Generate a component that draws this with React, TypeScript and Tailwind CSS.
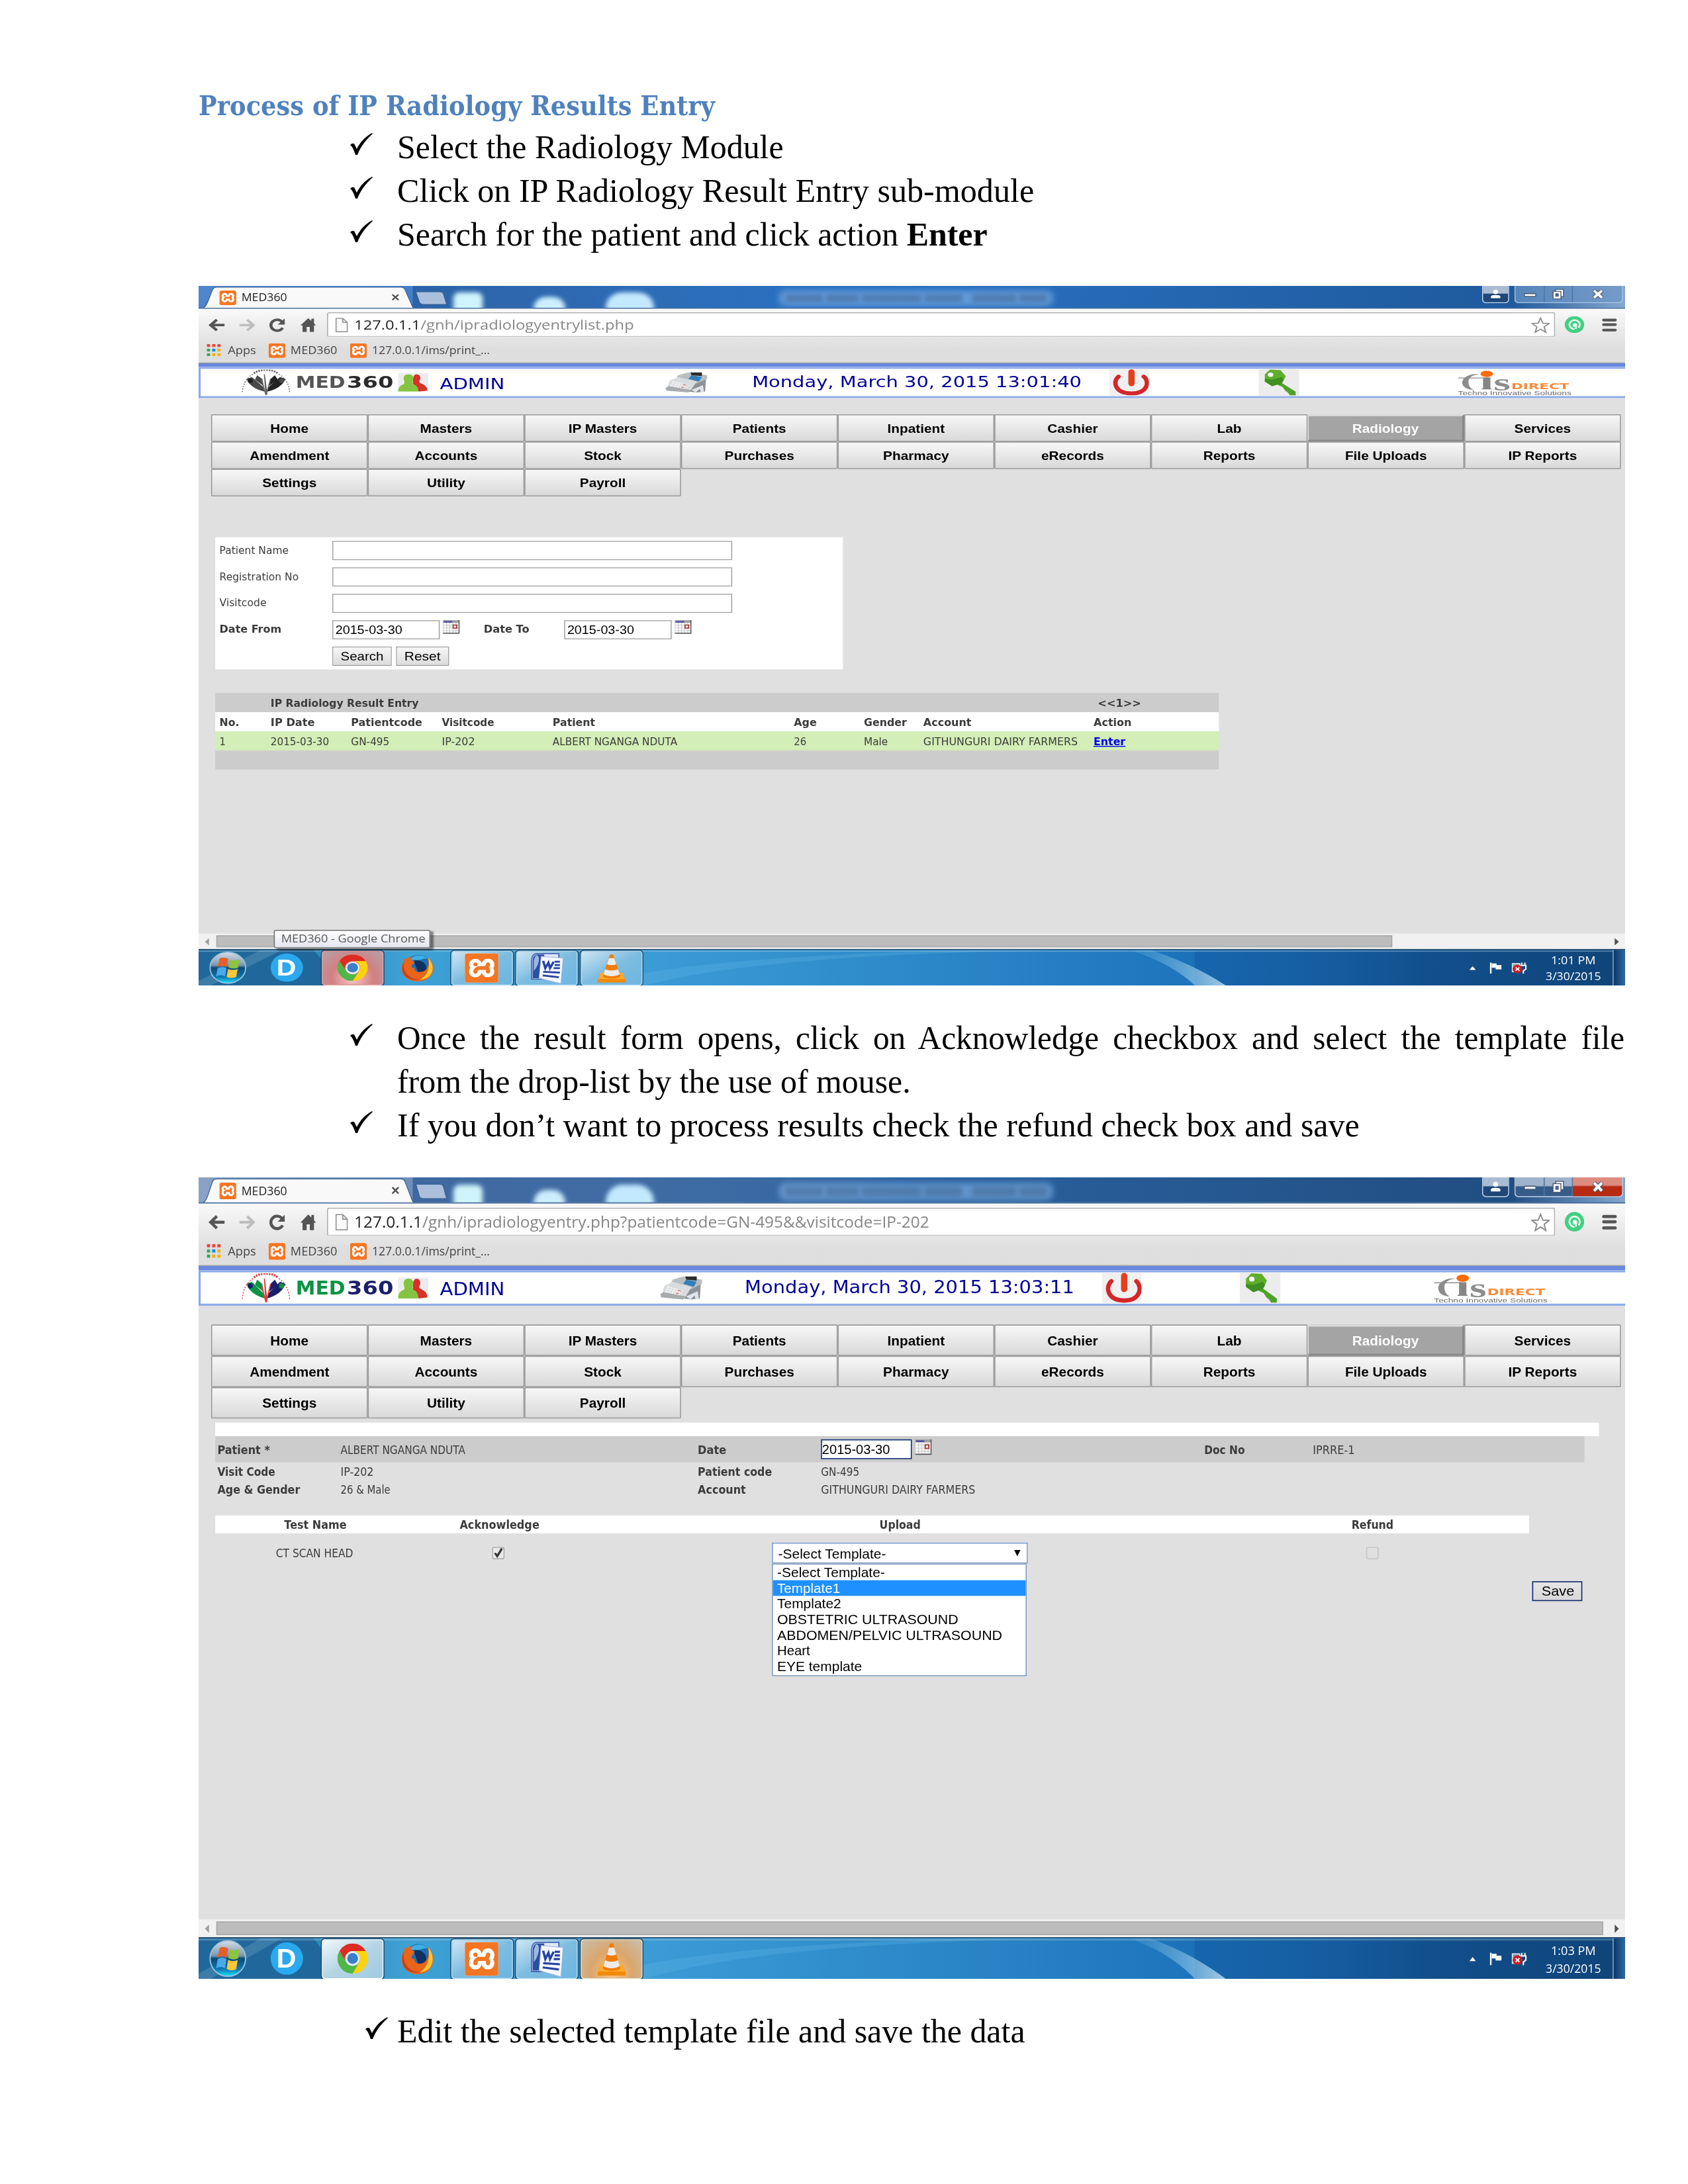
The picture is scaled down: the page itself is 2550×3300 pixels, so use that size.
import { useLayoutEffect, useRef, useState, type ReactNode } from "react";
import { SiXampp } from "react-icons/si";

/* Text squeezed or stretched horizontally to an exact width. */
function Fit({ w, className = "", children }: { w: number; className?: string; children: ReactNode }) {
  const ref = useRef<HTMLSpanElement>(null);
  const [s, setS] = useState(1);
  useLayoutEffect(() => {
    if (ref.current && ref.current.offsetWidth) setS(w / ref.current.offsetWidth);
  }, [w]);
  return (
    <span className={"inline-block shrink-0 whitespace-nowrap text-left " + className} style={{ width: w }}>
      <span ref={ref} className="inline-block origin-left" style={{ transform: `scaleX(${s})` }}>
        {children}
      </span>
    </span>
  );
}

/* Page label: sits slightly low in its row. */
function Label({ w, className = "", children }: { w: number; className?: string; children: ReactNode }) {
  return <Fit w={w} className={"pt-[2px] " + className}>{children}</Fit>;
}

/* ---------- document text ---------- */

function Tick({ className }: { className: string }) {
  return (
    <svg viewBox="0 0 34 33" className={"h-[33px] w-[34px] shrink-0 " + className}>
      <path d="M0 18 C3 15 6 15 7 18 L10 24 C15 14 22 6 33 0 L34 1 C24 10 16 20 11 33 L8 33 C6 27 4 21 0 18Z" fill="#000" />
    </svg>
  );
}

function Step({ w, children, cont = false, last = false }: { w: number; children: ReactNode; cont?: boolean; last?: boolean }) {
  return (
    <div className="flex h-[66px] items-start">
      <div className={last ? "flex w-[300px] pl-[252px]" : "flex w-[300px] pl-[229px]"}>
        {!cont && <Tick className="mt-[12px]" />}
      </div>
      <Fit w={w} className="font-['Liberation_Serif',serif] text-[50px] leading-[66px] text-black">
        {children}
      </Fit>
    </div>
  );
}

/* ---------- small icons ---------- */

function Xampp({ className }: { className: string }) {
  return (
    <div className={"relative shrink-0 overflow-hidden rounded-[2px] bg-white " + className}>
      <SiXampp className="h-full w-full scale-[1.04] text-[#f37623]" />
    </div>
  );
}

function Calendar({ className = "" }: { className?: string }) {
  return (
    <svg viewBox="0 0 16 15" className={"h-[15px] w-[16px] shrink-0 " + className}>
      <rect width="16" height="15" fill="#fff" />
      <rect width="16" height="3" fill="#a0a0a0" />
      <rect x="1" y="1" width="8" height="1.6" fill="#4a4aa8" />
      <path d="M1 5.5H15M1 8.5H15M1 11.5H15M3.5 3V14M6.5 3V14M9.5 3V14M12.5 3V14" stroke="#c8c8c8" strokeWidth="0.8" />
      <rect x="9.8" y="5.3" width="3.4" height="3.4" fill="#fff" stroke="#a83c3c" strokeWidth="1.2" />
      <path d="M0 14.4H16M15.5 0V15" stroke="#555" strokeWidth="1.2" />
      <path d="M0.3 0V15" stroke="#aaa" strokeWidth="0.6" />
    </svg>
  );
}

function ChromeIcon() {
  return (
    <svg viewBox="0 0 48 48" className="h-[29px] w-[29px]">
      <path d="M24 12H44.8A24 24 0 0 0 3.2 12L13.6 30A12 12 0 0 1 24 12Z" fill="#dd2c20" />
      <path d="M24 12H44.8A24 24 0 0 1 24 48L34.4 30A12 12 0 0 0 24 12Z" fill="#fdd20a" />
      <path d="M13.6 30L3.2 12A24 24 0 0 0 24 48L34.4 30A12 12 0 0 1 13.6 30Z" fill="#4fb648" />
      <circle cx="24" cy="24" r="11" fill="#eef3f7" />
      <circle cx="24" cy="24" r="8.6" fill="#3a7fcb" />
    </svg>
  );
}

function FirefoxIcon() {
  return (
    <svg viewBox="0 0 31 31" className="h-[31px] w-[31px]">
      <circle cx="16.5" cy="14" r="12.5" fill="#1c6fb6" />
      <path d="M8 6A12.5 12.5 0 0 1 26 6C22 4 19 8 14 7C11 7 9 8 8 6Z" fill="#3db0e8" />
      <path d="M12 8C18 6 24 10 24 16C24 20 20 22 16 20Z" fill="#10305f" />
      <path d="M25 4C33 11 32 22 26 27C20 32 10 32 4 26C-1 20 0 12 3 8L3 5L5 6L9 3C9 6 10 8 13 9L11 12C9 14 10 16 13 16C12 20 17 21 20 20C25 19 28 12 25 4Z" fill="#e8641b" />
      <path d="M26 5C32 12 31 21 26 26C23 28 20 29 17 29C25 25 28 16 26 5Z" fill="#fbc62d" />
      <path d="M3 8C1 14 3 22 9 26C15 30 20 28 23 26C16 31 6 30 2 22C0 17 1 11 3 8Z" fill="#c8401a" />
    </svg>
  );
}

function WordIcon() {
  return (
    <svg viewBox="0 0 32 34" className="h-[34px] w-[32px]">
      <path d="M6 1H27V29H1V8C1 4 3 1 6 1Z" fill="#dfe8f8" stroke="#4a67b4" strokeWidth="1.2" />
      <path d="M6 2H13V28H2V8C2 5 4 2 6 2Z" fill="#2b4fa0" />
      <path d="M5 3C10 2 8 14 3 20V8Z" fill="#9db7ea" />
      <path d="M10 4L31 6L29 34L8 28Z" fill="#f4f7fd" stroke="#9fb2d8" strokeWidth="0.6" />
      <path d="M12 9L14 17L17 11L18.5 17L22 10" stroke="#2443a0" strokeWidth="2.2" fill="none" />
      <path d="M23 10H28M23 13.5H28M22 17H28M12 21L28 22M11.5 25L27 27" stroke="#2443a0" strokeWidth="2" />
    </svg>
  );
}

function VlcIcon() {
  return (
    <svg viewBox="0 0 27 32" className="h-[32px] w-[27px]">
      <path d="M3 21H24L27 30V32H0V30Z" fill="#f28a0c" />
      <path d="M3 21H24L26 28H1Z" fill="#ffab2e" />
      <path d="M12 1H15L22 25C20 28 7 28 5 25Z" fill="#f07d0a" />
      <path d="M11 5H16L18 11.5C16 13 11 13 9.2 11.5Z" fill="#ecebe8" />
      <path d="M7.4 17C10 19 17 19 19.6 17L21.3 22.6C18 25.5 9 25.5 5.7 22.6Z" fill="#ecebe8" />
    </svg>
  );
}

function StartOrb({ id }: { id: string }) {
  return (
    <svg viewBox="0 0 38 38" className="h-[37px] w-[38px]">
      <defs>
        <linearGradient id={id} x1="0" y1="0" x2="0" y2="1">
          <stop offset="0" stopColor="#d5dde6" />
          <stop offset="0.42" stopColor="#7d97ae" />
          <stop offset="0.5" stopColor="#0c4a78" />
          <stop offset="0.8" stopColor="#0a78b4" />
          <stop offset="1" stopColor="#1be4ff" />
        </linearGradient>
      </defs>
      <circle cx="19" cy="19" r="17.5" fill={`url(#${id})`} stroke="#9cc3dc" strokeWidth="1.2" />
      <path d="M11 8.5C14 7 17 8 19.5 9L18 18C15 16.5 12 16.5 9 18Z" fill="#e4602a" />
      <path d="M21 10C24 11.5 27 11 30.5 9.5L29 19C26 20.5 22.5 20 19.5 18.5Z" fill="#8cc441" />
      <path d="M9 19.5C12 18 15 18 17.7 19.5L16.3 28.5C13.5 27 10.5 27 7.5 28.5Z" fill="#4aa9e6" />
      <path d="M19.3 20.3C22 21.8 25.5 22 28.7 20.5L27.2 29.5C24 31 20.5 30.8 17.8 29.3Z" fill="#fcc634" />
    </svg>
  );
}

function MedLogo({ color }: { color: boolean }) {
  const green = color ? "#0b9444" : "#4a4a4a";
  const navy = color ? "#1b1f6b" : "#222222";
  const red = color ? "#e03a3e" : "#666666";
  return (
    <div className="flex h-[28px] w-[147px] shrink-0 items-center">
      <svg viewBox="0 0 47 28" className="h-[28px] w-[47px] shrink-0">
        <path d="M12 4A14 9 0 0 1 35 4" fill="none" stroke={red} strokeWidth="2" strokeDasharray="1.6 0.9" />
        <path d="M11 5C5 9 1 16 0.8 26M36 5C42 9 46 16 46.2 26" fill="none" stroke={red} strokeWidth="1" strokeDasharray="1.2 1.5" />
        <path d="M5 10L10 8L21 19L22.500 24C14 22 7 17 5 10Z" fill={green} />
        <path d="M15 6L20 10L21.500 18L13 11Z" fill={green} />
        <path d="M42 10L37 8L26 19L24.500 24C33 22 40 17 42 10Z" fill={navy} />
        <path d="M32 6L28 10L26 18L35 11Z" fill={navy} />
        <circle cx="8.500" cy="12" r="2.500" fill={navy} />
        <circle cx="38.500" cy="12" r="2.500" fill={green} />
        <path d="M23.500 28L19 10M23.500 28L22 5L24.500 27M23.500 28L28 10" fill="none" stroke={red} strokeWidth="1" />
      </svg>
      <Fit w={47} className={color ? "ml-[5px] font-['DejaVu_Sans',sans-serif] text-[18.5px] leading-[28px] font-bold text-[#0b9444]" : "ml-[5px] font-['DejaVu_Sans',sans-serif] text-[18.5px] leading-[28px] font-bold text-[#555555]"}>MED</Fit>
      <Fit w={45} className={color ? "ml-[2px] font-['DejaVu_Sans',sans-serif] text-[18.5px] leading-[28px] font-bold text-[#1b1f6b]" : "ml-[2px] font-['DejaVu_Sans',sans-serif] text-[18.5px] leading-[28px] font-bold text-[#2a2a2a]"}>360</Fit>
    </div>
  );
}

function People() {
  return (
    <svg viewBox="0 0 29 20" className="ml-[3px] h-[20px] w-[29px] shrink-0">
      <rect width="29" height="20" fill="#ececec" />
      <path d="M17 1C21 1 22 4 21 7C20 9 20 10 22 11C26 13 28 15 28 19L20 20L14 11C15 9 13 3 17 1Z" fill="#d8322b" />
      <path d="M10 1C14 1 15 4 14.5 7C14 9 13 11 15 12C18 13 19.5 16 19.5 20H0C0 16 2 13 5 12C7 11 6 9 5.5 7C5 4 6 1 10 1Z" fill="#85c441" />
    </svg>
  );
}

function Register({ className }: { className: string }) {
  return (
    <svg viewBox="0 0 41 24" className={"h-[24px] w-[41px] shrink-0 " + className}>
      <path d="M23 14L39 6L38 22L30 23L22 22Z" fill="#8d9296" />
      <path d="M25 20L36 15L37 23H34L33 19L29 23Z" fill="#dfe5ea" />
      <path d="M12 4L22 1L40 4L40 8L30 13L10 8Z" fill="#b9bec2" />
      <path d="M4 10L12 6L30 11L24 21L2 17Z" fill="#d9dcde" />
      <path d="M0 18L3 16L24 20L22 23L1 21Z" fill="#a7abae" />
      <path d="M25 4L35 6L32 11L22 8Z" fill="#2f7fbd" />
      <path d="M24 1L35 1L35 5L25 4Z" fill="#2b2b2b" />
      <path d="M7 11L22 15M6 13L21 17M5 15L19 18.5" stroke="#f7f7f7" strokeWidth="1.3" strokeDasharray="2 1" />
      <path d="M17 14L20 15M15 17L18 17.5" stroke="#d88" strokeWidth="1.2" />
    </svg>
  );
}

function Power({ className }: { className: string }) {
  return (
    <svg viewBox="0 0 38 30" className={"h-[30px] w-[38px] shrink-0 " + className}>
      <rect width="38" height="30" fill="#f0f0f0" />
      <path d="M9 8.5C3 14 5 27 21.3 27C37 27 39 14 33 8.5" fill="none" stroke="#d3272a" strokeWidth="4.200" strokeLinecap="round" />
      <path d="M21.3 3.5V16" stroke="#e33f1f" strokeWidth="6" strokeLinecap="round" />
    </svg>
  );
}

function KeyIcon({ className }: { className: string }) {
  return (
    <svg viewBox="0 0 39 30" className={"h-[30px] w-[39px] shrink-0 " + className}>
      <rect width="39" height="30" fill="#ececec" />
      <path d="M20 14L35.5 25V29L30 29L28 26L25.5 24L23 20L17 17Z" fill="#4ea22a" />
      <path d="M11 1L21 1.5L26 8L23 15L13 19L6 14L6 6Z" fill="#5fae2c" />
      <path d="M6 11L13 12L22 9L24 12L22 16L13 19L6 14Z" fill="#3f8f22" />
      <ellipse cx="11.5" cy="6.5" rx="2.6" ry="2.3" fill="#fff" />
    </svg>
  );
}

function CisLogo({ className }: { className: string }) {
  return (
    <div className={"flex h-[30px] w-[109px] shrink-0 flex-col justify-end " + className}>
      <div className="flex h-[22px] items-end">
        <svg viewBox="0 0 36 22" className="h-[22px] w-[36px] shrink-0">
          <path d="M20 4C11 3 4 8 4 13C4 18 9 21 15 21C11 19 10 16 10 12C10 8 13 5 20 4Z" fill="#8c8c8c" />
          <path d="M0 8H26" stroke="#8c8c8c" strokeWidth="0.9" />
          <path d="M24 7.5H31V19L32.5 20.5H22L24 19Z" fill="#858585" />
          <ellipse cx="27.5" cy="3.6" rx="6" ry="3.5" fill="#fd6c06" />
        </svg>
        <Fit w={16} className="-ml-[2px] font-['Liberation_Serif',serif] text-[26px] leading-[17px] font-bold text-[#8c8c8c]">s</Fit>
        <Fit w={56} className="ml-[1px] font-['DejaVu_Sans',sans-serif] text-[8.5px] leading-[9px] font-bold text-[#fb8a38]">DIRECT</Fit>
      </div>
      <Fit w={109} className="font-['Liberation_Sans',sans-serif] text-[6px] leading-[6px] text-[#6a6a6a]">Techno Innovative Solutions</Fit>
    </div>
  );
}

/* ---------- browser chrome ---------- */

const segoe = "font-['Open_Sans',sans-serif]";

function TitleBar({ active }: { active: boolean }) {
  return (
    <div
      className={
        active
          ? "relative flex h-[25px] overflow-hidden border-b border-[#41699c] bg-linear-to-r from-[#8ba2c4] via-[#2b62a0] via-50% to-[#1f4a7c]"
          : "relative flex h-[25px] overflow-hidden border-b border-[#41699c] bg-linear-to-r from-[#4f86cc] via-[#2d77c9] via-40% to-[#1c5596]"
      }
    >
      <div className="absolute inset-y-0 left-[205px] w-[500px] bg-linear-to-r from-[#1d4f8e]/60 to-transparent" />
      <div className="absolute inset-y-0 right-0 w-[110px] bg-linear-to-r from-transparent to-[#86a8d0]" />
      <div className="absolute top-[7px] left-[244px] h-[26px] w-[28px] rounded-md bg-[#cff4fb] blur-[2.5px]" />
      <div className="absolute top-[12px] left-[321px] h-[20px] w-[30px] rounded-t-xl bg-[#cdeeff] blur-[2.5px]" />
      <div className="absolute top-[7px] left-[390px] h-[30px] w-[46px] rounded-t-2xl bg-[#c2e9ff] blur-[2.5px]" />
      <div className="absolute top-[5px] left-[556px] h-[17px] w-[262px] rounded-md bg-[#86b6ea] opacity-60 blur-[3px]" />
      <div className="absolute top-[9px] left-[562px] flex h-[9px] w-[250px] gap-[3px] opacity-45 blur-[2px]">
        <div className="w-[38px] bg-[#3c5f8c]" />
        <div className="w-[32px] bg-[#3c5f8c]" />
        <div className="w-[60px] bg-[#3c5f8c]" />
        <div className="w-[38px] bg-[#3c5f8c]" />
        <div className="w-[4px]" />
        <div className="w-[45px] bg-[#3c5f8c]" />
        <div className="w-[27px] bg-[#3c5f8c]" />
      </div>
      <div className="relative flex h-[25px] w-[208px] shrink-0 items-center">
        <svg viewBox="0 0 208 25" className="absolute inset-0 h-[25px] w-[208px]">
          <path d="M0 25C6 25 7 22 9 17L13 5C14 2 15 1.5 18 1.5H193C196 1.5 197 2 198 5L203 18C205 23 205 25 209 25Z" fill="#f9f9f9" stroke="#3c5f90" strokeWidth="0.8" />
        </svg>
        <Xampp className="ml-[20px] h-[16px] w-[16px]" />
        <Fit w={44} className={"relative ml-[5px] text-[12px] leading-[16px] text-[#222] " + segoe}>MED360</Fit>
        <svg viewBox="0 0 7 7" className="relative ml-[100px] h-[7px] w-[7px]">
          <path d="M0.5 0.5L6.5 6.5M6.5 0.5L0.5 6.5" stroke="#555" strokeWidth="1.6" />
        </svg>
      </div>
      <svg viewBox="0 0 31 15" className="relative mt-[6px] -ml-[1px] h-[15px] w-[31px]">
        <path d="M1 0.5H24C26 0.5 27 1 27.5 3L30.5 14.3H8C6 14.3 5 13.5 4.5 12Z" fill="#a9bfdb" stroke="#3a6093" strokeWidth="0.8" />
      </svg>
      <div className="relative ml-auto flex h-[19px] items-start pr-[2px]">
        <div className="mr-[5.5px] flex h-[18.5px] w-[26px] items-center justify-center rounded-b-[4px] border border-t-0 border-[#c4d6ea] bg-linear-to-b from-[#a9bcd4] from-45% to-[#1f4777] to-50%">
          <svg viewBox="0 0 10 10" className="h-[10px] w-[10px]">
            <circle cx="5" cy="2.6" r="2.4" fill="#fff" />
            <path d="M0.5 9.5V7.5C0.5 5.5 9.5 5.5 9.5 7.5V9.5Z" fill="#fff" />
          </svg>
        </div>
        <div className={active ? "flex h-[18.5px] rounded-b-[4px] border border-t-0 border-[#c4d6ea] bg-linear-to-b from-[#a0b3cc] from-45% to-[#385c89] to-50%" : "flex h-[18.5px] rounded-b-[4px] border border-t-0 border-[#a9c4e2] bg-[#6e97c6]/70"}>
          <div className="flex w-[28px] items-center justify-center border-r border-[#4c76a8]">
            <div className="mt-[3px] h-[4px] w-[12px] rounded-[1px] border border-[#4a5a75] bg-white" />
          </div>
          <div className="flex w-[27px] items-center justify-center border-r border-[#4c76a8]">
            <svg viewBox="0 0 12 12" className="h-[12px] w-[12px]">
              <rect x="3.5" y="0.8" width="7.5" height="8" fill="#fff" stroke="#4a5a75" strokeWidth="0.9" />
              <rect x="1" y="3" width="7.5" height="8.3" fill="#fff" stroke="#4a5a75" strokeWidth="0.9" />
              <rect x="3.5" y="5.5" width="2.6" height="3" fill="#4a6a95" stroke="#4a5a75" strokeWidth="0.6" />
            </svg>
          </div>
          <div className={active ? "flex w-[47px] items-center justify-center rounded-br-[3px] bg-linear-to-b from-[#dd8d80] from-40% to-[#b82a12] to-50%" : "flex w-[47px] items-center justify-center"}>
            <svg viewBox="0 0 12 10" className="h-[10px] w-[12px]">
              <path d="M2 1L10 9M10 1L2 9" stroke="#4a5a75" strokeWidth="4.2" />
              <path d="M2.2 1.2L9.8 8.8M9.8 1.2L2.2 8.8" stroke="#fff" strokeWidth="2.6" />
            </svg>
          </div>
        </div>
      </div>
    </div>
  );
}

function Toolbar({ path, width }: { path: string; width: number }) {
  return (
    <div className="h-[60px] border-b border-[#a3a3a3] bg-linear-to-b from-[#f9f9f9] to-[#dedede] to-75%">
      <div className="flex h-[35px] items-center">
        <svg viewBox="0 0 16 14" className="ml-[9px] h-[14px] w-[16px]">
          <path d="M16 7H3M8.5 1.2L2.5 7L8.5 12.8" fill="none" stroke="#555" strokeWidth="2.8" />
        </svg>
        <svg viewBox="0 0 16 14" className="ml-[14px] h-[14px] w-[16px]">
          <path d="M0 7H13M7.5 1.2L13.5 7L7.5 12.8" fill="none" stroke="#bdbdbd" strokeWidth="2.6" />
        </svg>
        <svg viewBox="0 0 16 16" className="ml-[12px] h-[16px] w-[16px]">
          <path d="M13 4.5A6 6 0 1 0 13.5 11" fill="none" stroke="#555" strokeWidth="2.8" />
          <path d="M15.5 0.8V7.5H8.8Z" fill="#555" />
        </svg>
        <svg viewBox="0 0 16 16" className="ml-[14px] h-[16px] w-[16px]">
          <path d="M8 0.5L11 3.5V1H13.5V6L15.5 8.5H13.5V15.5H9.5V10H6.5V15.5H2.5V8.5H0.5Z" fill="#555" />
        </svg>
        <div className="ml-[10px] flex h-[27px] w-[1176px] items-center rounded-[2px] border border-[#a8a8a8] border-b-[#c6c6c6] bg-white">
          <svg viewBox="0 0 12 16" className="ml-[6.5px] h-[16px] w-[12px]">
            <path d="M0.6 0.6H7L11.4 5V15.4H0.6Z" fill="#fafafa" stroke="#909090" strokeWidth="1.1" />
            <path d="M7 0.6V5H11.4" fill="none" stroke="#909090" strokeWidth="1.1" />
          </svg>
          <Fit w={width} className={"ml-[6px] pb-[1px] text-[15px] leading-[24px] text-[#868686] " + segoe}>
            <span className="text-[#222]">127.0.1.1</span>{path}
          </Fit>
          <svg viewBox="0 0 18 18" className="mr-[4px] ml-auto h-[18px] w-[18px]">
            <path d="M9 1.2L11.2 6.9L17.2 7.2L12.5 11L14.1 16.9L9 13.5L3.9 16.9L5.5 11L0.8 7.2L6.8 6.9Z" fill="#fff" stroke="#8a8a8a" strokeWidth="1.2" />
          </svg>
        </div>
        <svg viewBox="0 0 20 20" className="ml-[9px] h-[19px] w-[19px]">
          <circle cx="10" cy="10" r="9.8" fill="#43cf80" />
          <path d="M10 15.2A5.2 5.2 0 1 1 14 13.5" fill="none" stroke="#e8fff2" strokeWidth="1.8" />
          <circle cx="10.5" cy="10.5" r="2.3" fill="#e8fff2" />
          <path d="M11.5 10V15" stroke="#e8fff2" strokeWidth="1.6" />
        </svg>
        <div className="ml-[17px] flex w-[14px] flex-col gap-[2.5px]">
          <div className="h-[3px] rounded-full bg-[#555]" />
          <div className="h-[3px] rounded-full bg-[#555]" />
          <div className="h-[3px] rounded-full bg-[#555]" />
        </div>
      </div>
      <div className={"flex h-[24px] items-center text-[12px] leading-[16px] text-[#444] " + segoe}>
        <div className="mt-[-3px] ml-[8px] grid grid-cols-3 gap-[2px]">
          <div className="size-[3px] bg-[#ea4335]" />
          <div className="size-[3px] bg-[#ea4335]" />
          <div className="size-[3px] bg-[#ea4335]" />
          <div className="size-[3px] bg-[#34a853]" />
          <div className="size-[3px] bg-[#1a88f0]" />
          <div className="size-[3px] bg-[#f5b000]" />
          <div className="size-[3px] bg-[#34a853]" />
          <div className="size-[3px] bg-[#f5b000]" />
          <div className="size-[3px] bg-[#f5b000]" />
        </div>
        <Fit w={27} className="mt-[-3px] ml-[7px]">Apps</Fit>
        <Xampp className="mt-[-3px] ml-[12px] h-[16px] w-[16px]" />
        <Fit w={45} className="mt-[-3px] ml-[5px]">MED360</Fit>
        <Xampp className="mt-[-3px] ml-[12px] h-[16px] w-[16px]" />
        <Fit w={113} className="mt-[-3px] ml-[5px]">127.0.0.1/ims/print_...</Fit>
      </div>
    </div>
  );
}

type HeaderGaps = { register: string; date: string; key: string; cis: string };

function AppHeader({ stamp, color, gaps }: { stamp: string; color: boolean; gaps: HeaderGaps }) {
  return (
    <div className="border-t-[4px] border-[#6687dd]">
      <div className="flex h-[34px] items-center border-2 border-r-0 border-[#8caae8] bg-white font-['DejaVu_Sans',sans-serif] text-[17px] leading-[24px] text-[#000099]">
        <div className="w-[38.5px] shrink-0" />
        <MedLogo color={color} />
        <People />
        <Fit w={62} className="ml-[11px] pt-[1px]">ADMIN</Fit>
        <Register className={gaps.register} />
        <Fit w={316} className={"pb-[3px] " + gaps.date}>{stamp}</Fit>
        <Power className="ml-[26px]" />
        <KeyIcon className={gaps.key} />
        <CisLogo className={gaps.cis} />
      </div>
    </div>
  );
}

const menu = [
  "Home", "Masters", "IP Masters", "Patients", "Inpatient", "Cashier", "Lab", "Radiology", "Services",
  "Amendment", "Accounts", "Stock", "Purchases", "Pharmacy", "eRecords", "Reports", "File Uploads", "IP Reports",
  "Settings", "Utility", "Payroll",
];

function Menu() {
  return (
    <div className="mt-[18px] ml-[12px] grid w-[1350px] grid-cols-9 font-['Liberation_Sans',sans-serif] text-[13.2px] leading-[15px] font-bold text-black">
      {menu.map((m) => (
        <div
          key={m}
          className={
            m === "Radiology"
              ? "flex h-[30px] items-center justify-center border border-t-2 border-r-2 border-b-2 border-[#888] border-t-[#dcdcdc] border-l-[#dcdcdc] bg-[#a4a4a4] text-white"
              : "flex h-[30px] items-center justify-center rounded-[1px] border border-[#9b9b9b] bg-linear-to-b from-[#f7f7f7] to-[#d9d9d9]"
          }
        >
          {m}
        </div>
      ))}
    </div>
  );
}

function ScrollBar({ full }: { full: boolean }) {
  return (
    <div className="flex h-[17px] items-center bg-[#f1f1f1]">
      <div className="ml-[6px] size-0 border-y-[4px] border-r-[4px] border-y-transparent border-r-[#a0a0a0]" />
      <div className={full ? "ml-[7px] h-[13px] w-[1328px] border border-[#a8a8a8] bg-[#bcbcbc]" : "ml-[7px] h-[13px] w-[1126px] border border-[#a8a8a8] bg-[#bcbcbc]"} />
      <div className="mr-[6px] ml-auto size-0 border-y-[4px] border-l-[4px] border-y-transparent border-l-[#505050]" />
    </div>
  );
}

const plainBtn = "border-[#b5dcf2] bg-linear-to-br from-[#cfe5f2] via-[#7dbce0] to-[#6cb6e2]";
const tallBtn = "flex h-[38px] w-[59px] items-center justify-center rounded-[3px] border shadow-[0_0_0_1px_#1c4c6c] ";

function TaskBar({ time, id, first }: { time: string; id: string; first: boolean }) {
  return (
    <div className="relative flex h-[40px] items-center overflow-hidden border-t border-[#1c4460] bg-linear-to-r from-[#1e6498] via-[#3fa3d6] via-15% to-[#1766ad] to-45%">
      <svg viewBox="0 0 1366 40" preserveAspectRatio="none" className="absolute inset-0 h-[40px] w-[1366px]">
        <defs>
          <linearGradient id={id + "r"} x1="0" x2="1">
            <stop offset="0" stopColor="#1664ad" stopOpacity="0" />
            <stop offset="0.6" stopColor="#124f8c" />
            <stop offset="1" stopColor="#0f4478" />
          </linearGradient>
          <linearGradient id={id + "m"} x1="0" x2="1">
            <stop offset="0" stopColor="#3c9cd6" />
            <stop offset="1" stopColor="#1d74bb" />
          </linearGradient>
          <linearGradient id={id + "s"} x1="0" x2="1">
            <stop offset="0" stopColor="#5fb2e2" stopOpacity="0.2" />
            <stop offset="1" stopColor="#c4e6f6" />
          </linearGradient>
        </defs>
        <path d="M0 0H110L140 40H0Z" fill="#20689b" />
        <path d="M0 34L60 0H80L10 40H0Z" fill="#6fa3c4" opacity="0.35" />
        <rect x="424" width="530" height="40" fill={`url(#${id}m)`} />
        <path d="M424 40C520 10 700 0 900 0H760C640 2 500 10 424 26Z" fill="#67bbe8" opacity="0.25" />
        <path d="M900 0C930 10 960 25 985 40H1366V0Z" fill={`url(#${id}r)`} />
        <path d="M890 0H910C940 10 965 25 985 40H955C940 24 920 10 890 0Z" fill={`url(#${id}s)`} opacity="0.8" />
        <rect width="1366" height="1" y="1" fill="#9fd0ec" opacity="0.5" />
      </svg>
      <div className="relative ml-[8.5px] w-[38px]"><StartOrb id={id} /></div>
      <div className="relative ml-[22px] flex size-[31px] items-center justify-center rounded-full bg-[#2ba9ee] font-['Liberation_Sans',sans-serif] text-[26px] leading-[31px] font-bold text-white">D</div>
      <div className={"relative ml-[18.5px] " + tallBtn + (first ? "border-[#f6a3a0] bg-radial-[at_50%_80%] from-[#f7c9c9] via-[#d27f80] to-[#b5a3aa]" : "border-white bg-linear-to-br from-[#f2f8fb] via-[#b5d5e4] to-[#9ecbe2]")}>
        <ChromeIcon />
      </div>
      <div className="relative ml-[17px]"><FirefoxIcon /></div>
      <div className={"relative ml-[16.5px] " + tallBtn + plainBtn}><Xampp className="h-[32px] w-[32px]" /></div>
      <div className={"relative ml-[3.5px] " + tallBtn + plainBtn}><WordIcon /></div>
      <div className={"relative ml-[2.5px] " + tallBtn + (first ? plainBtn : "border-[#ffd9a8] bg-radial-[at_50%_90%] from-[#ffc27a] via-[#d9a66c] to-[#c9bfae]")}><VlcIcon /></div>
      <div className="relative ml-auto size-0 border-x-[3px] border-b-[4px] border-x-transparent border-b-white" />
      <svg viewBox="0 0 14 14" className="relative ml-[12px] h-[13px] w-[14px]">
        <path d="M2 1V14" stroke="#fff" strokeWidth="1.6" />
        <path d="M3 2H8V4H13V9H7V7H3Z" fill="#fff" />
      </svg>
      <svg viewBox="0 0 15 15" className="relative ml-[8px] h-[15px] w-[15px]">
        <path d="M10 2V5M13 2V5M8.5 5H14V9L11.5 11V14" fill="none" stroke="#f2f2f2" strokeWidth="1.4" />
        <path d="M1 3H8V12H1Z" fill="#8a96a0" stroke="#eee" strokeWidth="1" />
        <circle cx="6" cy="9" r="4.6" fill="#c8202a" />
        <path d="M4.2 7.2L7.8 10.8M7.8 7.2L4.2 10.8" stroke="#fff" strokeWidth="1.2" />
      </svg>
      <div className={"relative ml-[17px] flex w-[54px] flex-col items-center pt-[2px] text-[12px] leading-[16.5px] text-white " + segoe}>
        <Fit w={43}>{time}</Fit>
        <Fit w={53}>3/30/2015</Fit>
      </div>
      <div className="relative ml-[11px] h-[40px] w-[12px] border-l border-[#7aa6cf] bg-linear-to-r from-[#0c3866] to-[#2d6ba6]" />
    </div>
  );
}

/* ---------- page one ---------- */

const field = "flex items-center border border-[#a5a5a5] bg-white font-['Liberation_Sans',sans-serif] text-[13.3px] leading-[17px] text-black";
const button = "flex h-[21px] items-center justify-center rounded-[1px] border border-[#a0a0a0] border-b-[#888] bg-linear-to-b from-[#f6f6f6] to-[#dcdcdc] font-['Liberation_Sans',sans-serif] text-[13.3px] leading-[17px] text-black";
const tahoma = "font-['DejaVu_Sans',sans-serif] text-[11px] leading-[14px] text-[#3b3b3b]";

function SearchForm() {
  const rows: [string, number][] = [["Patient Name", 66], ["Registration No", 76], ["Visitcode", 45]];
  return (
    <div className={"mt-[44.5px] ml-[16px] flex h-[145px] w-[600.5px] flex-col bg-white pl-[4px] " + tahoma}>
      {rows.map(([label, w]) => (
        <div key={label} className="flex h-[29px] items-center">
          <div className="w-[108px]"><Label w={w}>{label}</Label></div>
          <div className={field + " h-[21px] w-[383px]"} />
        </div>
      ))}
      <div className="flex h-[29px] items-center">
        <div className="w-[108px] font-bold"><Label w={59}>Date From</Label></div>
        <div className={field + " h-[21px] w-[103px] pl-[2px]"}><Fit w={64}>2015-03-30</Fit></div>
        <Calendar className="mt-[-5px] ml-[3px]" />
        <Label w={44} className="ml-[23px] font-bold">Date To</Label>
        <div className={field + " ml-[33px] h-[21px] w-[103px] pl-[2px]"}><Fit w={64}>2015-03-30</Fit></div>
        <Calendar className="mt-[-5px] ml-[3px]" />
      </div>
      <div className="flex h-[29px] items-center pl-[108px]">
        <div className={button + " w-[57px]"}><Fit w={41}>Search</Fit></div>
        <div className={button + " ml-[4px] w-[51px]"}><Fit w={35}>Reset</Fit></div>
      </div>
    </div>
  );
}

const cols = "grid h-[21px] grid-cols-[49px_77px_87px_106px_231px_67px_57px_163px_120px] items-center pl-[4px] ";

function ResultTable() {
  return (
    <div className={"mt-[26.5px] ml-[16px] w-[961px] " + tahoma}>
      <div className={cols + "bg-[#cccccc] font-bold"}>
        <span />
        <Label w={142}>IP Radiology Result Entry</Label>
        <span /><span /><span /><span /><span /><span />
        <Label w={42} className="ml-[4px]">{"<<1>>"}</Label>
      </div>
      <div className={cols + "bg-white font-bold"}>
        <Label w={19}>No.</Label>
        <Label w={42}>IP Date</Label>
        <Label w={68}>Patientcode</Label>
        <Label w={50}>Visitcode</Label>
        <Label w={41}>Patient</Label>
        <Label w={22}>Age</Label>
        <Label w={41}>Gender</Label>
        <Label w={46}>Account</Label>
        <Label w={36}>Action</Label>
      </div>
      <div className={cols + "bg-[#d3eeb7]"}>
        <Label w={6}>1</Label>
        <Label w={56}>2015-03-30</Label>
        <Label w={37}>GN-495</Label>
        <Label w={32}>IP-202</Label>
        <Label w={119}>ALBERT NGANGA NDUTA</Label>
        <Label w={12}>26</Label>
        <Label w={23}>Male</Label>
        <Label w={148}>GITHUNGURI DAIRY FARMERS</Label>
        <Label w={31} className="font-bold text-[#0000ee]"><span className="underline">Enter</span></Label>
      </div>
      <div className="h-[21px] bg-[#cccccc]" />
    </div>
  );
}

/* ---------- page two ---------- */

const infoCols = "grid grid-cols-[118px_341.5px_118px_367px_104px_auto] items-center pl-[2px] ";
const options: [string, number][] = [
  ["-Select Template-", 103], ["Template1", 60], ["Template2", 61], ["OBSTETRIC ULTRASOUND", 173],
  ["ABDOMEN/PELVIC ULTRASOUND", 216], ["Heart", 32], ["EYE template", 81],
];

function ResultForm() {
  return (
    <div className={"mt-[4px] ml-[16px] flex-1 " + tahoma}>
      <div className="h-[13px] w-[1325px] bg-white" />
      <div className={infoCols + "h-[25px] w-[1311px] bg-[#cccccc]"}>
        <Label w={50} className="font-bold">Patient *</Label>
        <Label w={119}>ALBERT NGANGA NDUTA</Label>
        <Label w={27} className="font-bold">Date</Label>
        <div className="flex items-center">
          <div className="flex h-[19px] w-[87px] items-center border-[1.3px] border-[#0a2568] bg-white font-['Liberation_Sans',sans-serif] text-[13.3px] leading-[17px] text-black">
            <Fit w={65}>2015-03-30</Fit>
          </div>
          <Calendar className="mt-[-4px] ml-[3px]" />
        </div>
        <Label w={39} className="font-bold">Doc No</Label>
        <Label w={40}>IPRRE-1</Label>
      </div>
      <div className={infoCols + "h-[18px] w-[1311px]"}>
        <Label w={55} className="font-bold">Visit Code</Label>
        <Label w={32}>IP-202</Label>
        <Label w={71} className="font-bold">Patient code</Label>
        <Label w={37}>GN-495</Label>
      </div>
      <div className={infoCols + "h-[17px] w-[1311px]"}>
        <Fit w={79} className="font-bold">Age &amp; Gender</Fit>
        <Fit w={48}>26 &amp; Male</Fit>
        <Fit w={46} className="font-bold">Account</Fit>
        <Fit w={148}>GITHUNGURI DAIRY FARMERS</Fit>
      </div>
      <div className="mt-[16px] flex h-[17px] w-[1258px] items-center bg-white font-bold">
        <Label w={60} className="ml-[65.5px]">Test Name</Label>
        <Label w={76} className="ml-[108px]">Acknowledge</Label>
        <Label w={39} className="ml-[326px]">Upload</Label>
        <Label w={40} className="ml-[413px]">Refund</Label>
      </div>
      <div className="mt-[9px] flex h-[20px] items-center">
        <Label w={74} className="ml-[58px]">CT SCAN HEAD</Label>
        <svg viewBox="0 0 12 12" className="ml-[133px] h-[12px] w-[12px]">
          <rect x="0.5" y="0.5" width="11" height="11" rx="1.5" fill="#e9e9e9" stroke="#a8a8a8" />
          <path d="M2.8 6L5 9L9.5 1.5" fill="none" stroke="#333" strokeWidth="2" />
        </svg>
        <div className="relative ml-[256px] flex h-[20px] w-[245px] items-center border border-[#7b9ed6] border-b-[#8097b8] bg-white pl-[5px] font-['Liberation_Sans',sans-serif] text-[13.3px] leading-[15px] text-black">
          <Fit w={103}>-Select Template-</Fit>
          <div className="mr-[6px] ml-auto size-0 border-x-[3.5px] border-t-[6px] border-x-transparent border-t-black" />
          <div className="absolute top-[19px] left-[-1px] w-[244px] border border-[#7e9cbe] bg-white pb-[1px]">
            {options.map(([o, w], i) => (
              <div key={o} className={i === 1 ? "flex h-[15px] items-center bg-[#1e90ff] pl-[4px] text-white" : "flex h-[15px] items-center pl-[4px]"}>
                <Fit w={w}>{o}</Fit>
              </div>
            ))}
          </div>
        </div>
        <div className="ml-[324px] size-[12px] rounded-[2px] border border-[#c6c6c6] bg-[#e0e0e0]" />
      </div>
      <div className="mt-[16.5px] ml-[1261px] flex h-[19px] w-[48px] items-center justify-center border-[1.3px] border-[#0a2568] bg-linear-to-b from-[#e6e6e6] to-[#d8d8d8] font-['Liberation_Sans',sans-serif] text-[13.3px] leading-[15px] text-black">
        <Fit w={31}>Save</Fit>
      </div>
    </div>
  );
}

/* ---------- document ---------- */

const gapsOne: HeaderGaps = { register: "ml-[154px]", date: "ml-[42px]", key: "ml-[105px]", cis: "ml-[152px]" };
const gapsTwo: HeaderGaps = { register: "ml-[149px]", date: "ml-[40px]", key: "ml-[94px]", cis: "ml-[147px]" };

export default function App() {
  return (
    <div className="h-[3300px] w-[2550px] overflow-hidden bg-white pt-[131px] pl-[300px]">
      <div className="h-[58px]">
        <Fit w={780} className="font-['DejaVu_Serif',serif] text-[41px] leading-[58px] font-bold text-[#4f81bd]">
          Process of IP Radiology Results Entry
        </Fit>
      </div>
      <Step w={584}>Select the Radiology Module</Step>
      <Step w={962}>Click on IP Radiology Result Entry sub-module</Step>
      <Step w={892}>Search for the patient and click action <b>Enter</b></Step>

      <div className="mt-[45px] h-[1057px] w-[2155px] overflow-hidden">
        <div className="flex h-[768px] w-[1366px] origin-top-left scale-x-[1.5776] scale-y-[1.3763] flex-col bg-[#e0e0e0]">
          <TitleBar active={false} />
          <Toolbar path="/gnh/ipradiologyentrylist.php" width={268} />
          <AppHeader stamp="Monday, March 30, 2015 13:01:40" color={false} gaps={gapsOne} />
          <Menu />
          <SearchForm />
          <ResultTable />
          <div className="relative mt-auto">
            <ScrollBar full={false} />
            <div className={"absolute top-[-4px] left-[72px] z-10 flex h-[20px] w-[150px] items-center rounded-[2px] border border-[#767676] bg-linear-to-b from-white to-[#e4e5f0] pl-[5.5px] text-[12px] leading-[16px] text-[#575757] shadow-[3px_2px_2px_rgba(0,0,0,0.45)] " + segoe}>
              <Fit w={138}>MED360 - Google Chrome</Fit>
            </div>
          </div>
          <TaskBar time="1:01 PM" id="orb-one" first />
        </div>
      </div>

      <div className="h-[46px]" />
      <Step w={1854}>
        <span className="[word-spacing:9px]">Once the result form opens, click on Acknowledge checkbox and select the template file</span>
      </Step>
      <Step w={776} cont>from the drop-list by the use of mouse.</Step>
      <Step w={1454}>If you don’t want to process results check the refund check box and save</Step>

      <div className="mt-[46px] h-[1211px] w-[2155px] overflow-hidden">
        <div className="flex h-[768px] w-[1366px] origin-top-left scale-x-[1.5776] scale-y-[1.5769] flex-col bg-[#e0e0e0]">
          <TitleBar active />
          <Toolbar path="/gnh/ipradiologyentry.php?patientcode=GN-495&&visitcode=IP-202" width={551} />
          <AppHeader stamp="Monday, March 30, 2015 13:03:11" color gaps={gapsTwo} />
          <Menu />
          <ResultForm />
          <ScrollBar full />
          <TaskBar time="1:03 PM" id="orb-two" first={false} />
        </div>
      </div>

      <div className="h-[46px]" />
      <Step w={949} last>Edit the selected template file and save the data</Step>
    </div>
  );
}
